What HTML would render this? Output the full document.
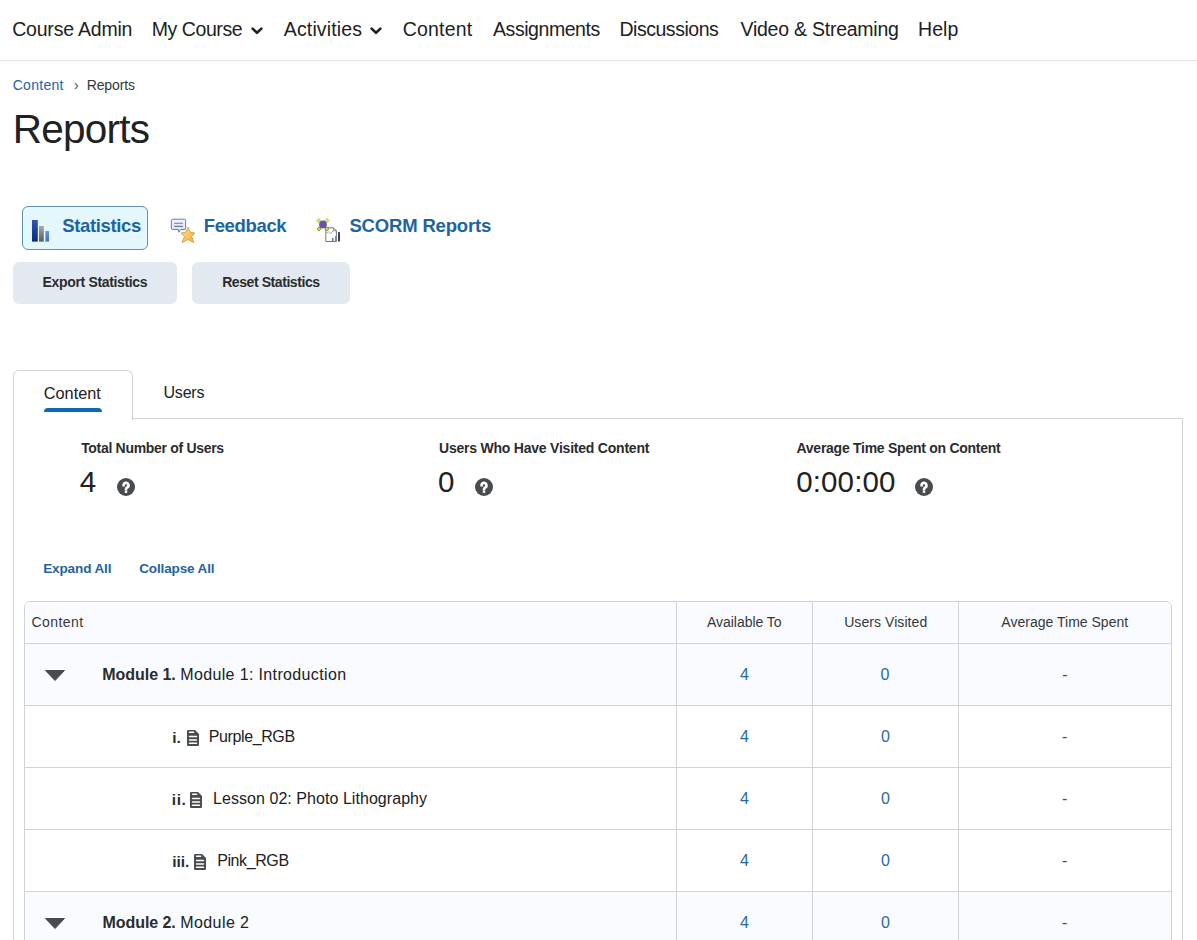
<!DOCTYPE html>
<html>
<head>
<meta charset="utf-8">
<style>
html,body{margin:0;padding:0;background:#fff;}
body{width:1197px;height:940px;overflow:hidden;position:relative;font-family:"Liberation Sans",sans-serif;color:#202122;}
.t{position:absolute;white-space:nowrap;line-height:1;}
.b{font-weight:bold;color:#2a2c2e;}
.b.lnk{color:#1d64a0;}
.lnk{color:#1d64a0;}
.box{position:absolute;box-sizing:border-box;}
svg{position:absolute;}
</style>
</head>
<body>
<div class="box" style="left:0;top:0;width:1197px;height:61px;border-bottom:1px solid #e4e5e6"></div>
<div class="box" style="left:0;top:61px;width:1197px;height:4px;background:linear-gradient(#f8f8f8,#fcfcfc 70%,#fff)"></div>
<div id="t1" class="t " style="left:12.20px;top:20.49px;font-size:19.5px;letter-spacing:-0.200px;">Course Admin</div>
<div id="t2" class="t " style="left:151.72px;top:20.49px;font-size:19.5px;letter-spacing:-0.425px;">My Course</div>
<div id="t3" class="t " style="left:283.84px;top:20.49px;font-size:19.5px;letter-spacing:0.133px;">Activities</div>
<div id="t4" class="t " style="left:402.68px;top:20.49px;font-size:19.5px;letter-spacing:0.200px;">Content</div>
<div id="t5" class="t " style="left:493.00px;top:20.49px;font-size:19.5px;letter-spacing:-0.440px;">Assignments</div>
<div id="t6" class="t " style="left:619.40px;top:20.49px;font-size:19.5px;letter-spacing:-0.460px;">Discussions</div>
<div id="t7" class="t " style="left:740.48px;top:20.49px;font-size:19.5px;letter-spacing:-0.238px;">Video &amp; Streaming</div>
<div id="t8" class="t " style="left:918.04px;top:20.49px;font-size:19.5px;letter-spacing:0.067px;">Help</div>
<svg style="left:250.6px;top:27px" width="12" height="8" viewBox="0 0 12 8"><path d="M1.6 1.6 L6 5.8 L10.4 1.6" fill="none" stroke="#202122" stroke-width="2.6" stroke-linecap="round" stroke-linejoin="round"/></svg>
<svg style="left:369.8px;top:27px" width="12" height="8" viewBox="0 0 12 8"><path d="M1.6 1.6 L6 5.8 L10.4 1.6" fill="none" stroke="#202122" stroke-width="2.6" stroke-linecap="round" stroke-linejoin="round"/></svg>
<div id="t9" class="t lnk" style="left:12.68px;top:77.95px;font-size:14px;letter-spacing:0.300px;">Content</div>
<div id="t10" class="t " style="left:74.00px;top:77.95px;font-size:14px;letter-spacing:0.000px;color:#494c4e">›</div>
<div id="t11" class="t " style="left:86.68px;top:77.95px;font-size:14px;letter-spacing:-0.100px;color:#35383a">Reports</div>
<div id="t12" class="t " style="left:12.84px;top:109.01px;font-size:40.5px;letter-spacing:-0.767px;">Reports</div>
<div class="box" style="left:22px;top:206px;width:126px;height:44px;border:1px solid #6294a8;border-radius:6px;background:#e3f7fc"></div>
<svg style="left:32px;top:220px" width="18" height="22" viewBox="0 0 18 22">
<defs>
<linearGradient id="g1" x1="0" y1="0" x2="0" y2="1"><stop offset="0" stop-color="#2f55b8"/><stop offset="1" stop-color="#0b2a78"/></linearGradient>
<linearGradient id="g2" x1="0" y1="0" x2="0" y2="1"><stop offset="0" stop-color="#a9a9a9"/><stop offset="1" stop-color="#5a5a5a"/></linearGradient>
<linearGradient id="g3" x1="0" y1="0" x2="0" y2="1"><stop offset="0" stop-color="#5a9ae8"/><stop offset="1" stop-color="#3a6fc8"/></linearGradient>
</defs>
<rect x="0" y="0" width="5.8" height="21.6" fill="url(#g1)"/>
<rect x="7" y="6" width="4.8" height="15.6" fill="url(#g2)"/>
<rect x="13.4" y="11" width="3.6" height="10.6" fill="url(#g3)"/>
</svg>
<div id="t13" class="t b lnk" style="left:62.36px;top:217.14px;font-size:18.5px;letter-spacing:-0.378px;">Statistics</div>
<svg style="left:165px;top:212px" width="35" height="36" viewBox="0 0 35 36">
<defs><linearGradient id="gs" x1="0" y1="0" x2="1" y2="1"><stop offset="0" stop-color="#fde39a"/><stop offset="1" stop-color="#f3aa35"/></linearGradient>
<linearGradient id="gb" x1="0" y1="0" x2="0" y2="1"><stop offset="0" stop-color="#f2f5fd"/><stop offset="1" stop-color="#d5ddf7"/></linearGradient></defs>
<path d="M7.9 7.2 h11.2 a1.6 1.6 0 0 1 1.6 1.6 v7.2 a1.6 1.6 0 0 1 -1.6 1.6 h-3.4 l-1.8 2.6 l-0.6 -2.6 h-5.4 a1.6 1.6 0 0 1 -1.6 -1.6 v-7.2 a1.6 1.6 0 0 1 1.6 -1.6z" fill="url(#gb)" stroke="#6f7c98" stroke-width="1"/>
<path d="M9.2 11.3 h8.6 M9.2 14.4 h8.6" stroke="#6f7c98" stroke-width="1.1"/>
<path d="M23 15.3 L25.2 20.2 L29.9 21 L26.5 24.6 L28.9 30.6 L23 27.6 L17 30.6 L19.5 24.6 L16 21 L20.8 20.2z" fill="url(#gs)" stroke="#d9962a" stroke-width="0.8" stroke-linejoin="round"/>
</svg>
<div id="t14" class="t b lnk" style="left:203.72px;top:217.14px;font-size:18.5px;letter-spacing:-0.343px;">Feedback</div>
<svg style="left:310px;top:212px" width="35" height="36" viewBox="0 0 35 36">
<path d="M15.8 15.8 h7.6 l3 3 v10.7 h-10.6z" fill="#fff" stroke="#7a7a7a" stroke-width="1"/>
<path d="M23.4 15.8 v3 h3" fill="none" stroke="#7a7a7a" stroke-width="0.9"/>
<path d="M16.3 21.5 l2.2 -1.8 l2 2.2 l2.5 -3" fill="none" stroke="#7cc05a" stroke-width="0.9"/>
<rect x="21.9" y="26" width="1.8" height="3.5" fill="#6a86c0"/>
<rect x="25" y="24" width="1.8" height="5.5" fill="#7c8a8c"/>
<rect x="28.1" y="20.1" width="1.8" height="9.4" fill="#1d3160"/>
<path d="M8.8 8.6 L16.9 16.9 M17 8.6 L9 16.9" stroke="#8db84a" stroke-width="1.4"/>
<circle cx="13" cy="12.4" r="3.9" fill="#6b52a6"/>
<rect x="7.3" y="7.1" width="3" height="3" transform="rotate(45 8.8 8.6)" fill="#cfe58a" stroke="#9cc048" stroke-width="0.6"/>
<rect x="15.5" y="7.1" width="3" height="3" transform="rotate(45 17 8.6)" fill="#cfe58a" stroke="#9cc048" stroke-width="0.6"/>
<rect x="7.5" y="15.4" width="3" height="3" transform="rotate(45 9 16.9)" fill="#b6dc4a" stroke="#5f8f1c" stroke-width="0.7"/>
<rect x="15.4" y="15.4" width="3" height="3" transform="rotate(45 16.9 16.9)" fill="#b6dc4a" stroke="#5f8f1c" stroke-width="0.7"/>
</svg>
<div id="t15" class="t b lnk" style="left:349.40px;top:217.14px;font-size:18.5px;letter-spacing:-0.167px;">SCORM Reports</div>
<div class="box" style="left:13px;top:262px;width:164px;height:42px;border-radius:6px;background:#e3e9f1"></div>
<div id="t16" class="t b" style="left:42.52px;top:275.05px;font-size:14px;letter-spacing:-0.338px;">Export Statistics</div>
<div class="box" style="left:192px;top:262px;width:158px;height:42px;border-radius:6px;background:#e3e9f1"></div>
<div id="t17" class="t b" style="left:222.20px;top:275.05px;font-size:14px;letter-spacing:-0.427px;">Reset Statistics</div>
<div class="box" style="left:13px;top:418px;width:1170px;height:600px;border:1px solid #d0d4d7;background:#fff"></div>
<div class="box" style="left:13px;top:370px;width:120px;height:50px;border:1px solid #d0d4d7;border-bottom:none;border-radius:6px 6px 0 0;background:#fff"></div>
<div id="t18" class="t " style="left:43.68px;top:384.90px;font-size:16.3px;letter-spacing:0.033px;">Content</div>
<div class="box" style="left:44px;top:408px;width:58px;height:4px;border-radius:4px 4px 0 0;background:#0a6ab8"></div>
<div id="t19" class="t " style="left:163.52px;top:385.15px;font-size:16px;letter-spacing:-0.200px;">Users</div>
<div id="t20" class="t b" style="left:81.16px;top:440.75px;font-size:14px;letter-spacing:-0.310px;">Total Number of Users</div>
<div id="t21" class="t " style="left:79.84px;top:467.12px;font-size:29.5px;letter-spacing:0.000px;">4</div>
<svg style="left:117px;top:478px" width="18" height="18" viewBox="0 0 18 18"><circle cx="9" cy="9" r="9" fill="#494c4e"/><path d="M6.6 7.3 a2.45 2.45 0 1 1 3.5 2.2 c-0.8 0.4 -1.1 0.8 -1.1 1.7" fill="none" stroke="#fff" stroke-width="2.6" stroke-linecap="square"/><rect x="7.8" y="12.7" width="2.4" height="2.2" fill="#fff"/></svg>
<div id="t22" class="t b" style="left:439.00px;top:440.75px;font-size:14px;letter-spacing:-0.221px;">Users Who Have Visited Content</div>
<div id="t23" class="t " style="left:438.00px;top:467.12px;font-size:29.5px;letter-spacing:0.000px;">0</div>
<svg style="left:475px;top:478px" width="18" height="18" viewBox="0 0 18 18"><circle cx="9" cy="9" r="9" fill="#494c4e"/><path d="M6.6 7.3 a2.45 2.45 0 1 1 3.5 2.2 c-0.8 0.4 -1.1 0.8 -1.1 1.7" fill="none" stroke="#fff" stroke-width="2.6" stroke-linecap="square"/><rect x="7.8" y="12.7" width="2.4" height="2.2" fill="#fff"/></svg>
<div id="t24" class="t b" style="left:796.52px;top:440.75px;font-size:14px;letter-spacing:-0.264px;">Average Time Spent on Content</div>
<div id="t25" class="t " style="left:796.32px;top:467.12px;font-size:29.5px;letter-spacing:0.100px;">0:00:00</div>
<svg style="left:915px;top:478px" width="18" height="18" viewBox="0 0 18 18"><circle cx="9" cy="9" r="9" fill="#494c4e"/><path d="M6.6 7.3 a2.45 2.45 0 1 1 3.5 2.2 c-0.8 0.4 -1.1 0.8 -1.1 1.7" fill="none" stroke="#fff" stroke-width="2.6" stroke-linecap="square"/><rect x="7.8" y="12.7" width="2.4" height="2.2" fill="#fff"/></svg>
<div id="t26" class="t b lnk" style="left:43.20px;top:562.07px;font-size:13.5px;letter-spacing:-0.111px;">Expand All</div>
<div id="t27" class="t b lnk" style="left:139.20px;top:562.07px;font-size:13.5px;letter-spacing:-0.127px;">Collapse All</div>
<div class="box" style="left:24px;top:601px;width:1148px;height:400px;border:1px solid #d0d4d7;border-radius:6px 6px 0 0;background:#fff;overflow:hidden">
<div style="position:absolute;left:0;top:0;width:1146px;height:41px;background:#f9fbff;border-bottom:1px solid #d0d4d7"></div>
<div style="position:absolute;left:0;top:42px;width:1146px;height:61px;background:#f9fbff;border-bottom:1px solid #d0d4d7"></div>
<div style="position:absolute;left:0;top:104px;width:1146px;height:61px;background:#fff;border-bottom:1px solid #d0d4d7"></div>
<div style="position:absolute;left:0;top:166px;width:1146px;height:61px;background:#fff;border-bottom:1px solid #d0d4d7"></div>
<div style="position:absolute;left:0;top:228px;width:1146px;height:61px;background:#fff;border-bottom:1px solid #d0d4d7"></div>
<div style="position:absolute;left:0;top:290px;width:1146px;height:61px;background:#f9fbff;border-bottom:1px solid #d0d4d7"></div>
<div style="position:absolute;left:651px;top:0;width:1px;height:400px;background:#d0d4d7"></div>
<div style="position:absolute;left:787px;top:0;width:1px;height:400px;background:#d0d4d7"></div>
<div style="position:absolute;left:933px;top:0;width:1px;height:400px;background:#d0d4d7"></div>
</div>
<div id="t28" class="t " style="left:31.52px;top:614.75px;font-size:14px;letter-spacing:0.433px;color:#35383a">Content</div>
<div id="t29" class="t " style="left:707.00px;top:614.75px;font-size:14px;letter-spacing:-0.036px;color:#35383a">Available To</div>
<div id="t30" class="t " style="left:844.20px;top:614.75px;font-size:14px;letter-spacing:0.067px;color:#35383a">Users Visited</div>
<div id="t31" class="t " style="left:1001.36px;top:614.75px;font-size:14px;letter-spacing:0.012px;color:#35383a">Average Time Spent</div>
<svg style="left:45px;top:670px" width="20" height="11" viewBox="0 0 20 11"><path d="M0.5 0.5 H19.5 L10 10.5z" fill="#494c4e" stroke="#494c4e" stroke-width="1" stroke-linejoin="round"/></svg>
<div id="t32" class="t b" style="left:102.20px;top:667.25px;font-size:16px;letter-spacing:-0.025px;">Module 1.</div>
<div id="t33" class="t " style="left:180.20px;top:667.25px;font-size:16px;letter-spacing:0.362px;">Module 1: Introduction</div>
<div id="t34" class="t " style="left:740.00px;top:667.25px;font-size:16px;letter-spacing:0.000px;color:#2a6aa0">4</div>
<div id="t35" class="t " style="left:880.52px;top:667.25px;font-size:16px;letter-spacing:0.000px;color:#2a6aa0">0</div>
<div id="t36" class="t " style="left:1062.16px;top:667.25px;font-size:16px;letter-spacing:0.000px;color:#494c4e">-</div>
<div id="t37" class="t b" style="left:172.36px;top:729.68px;font-size:15.5px;letter-spacing:-0.200px;">i.</div>
<svg style="left:187px;top:730px" width="12" height="16" viewBox="0 0 12 16"><path d="M1.2 0 h6.8 l4 4 v10.8 a1.2 1.2 0 0 1 -1.2 1.2 h-9.6 a1.2 1.2 0 0 1 -1.2 -1.2 v-13.6 a1.2 1.2 0 0 1 1.2 -1.2z" fill="#494c4e"/><rect x="1.8" y="1.5" width="5.6" height="1.5" rx="0.7" fill="#fff"/><rect x="1.8" y="5.7" width="8.4" height="1.5" rx="0.7" fill="#fff"/><rect x="1.8" y="9.2" width="8.4" height="1.5" rx="0.7" fill="#fff"/><rect x="1.8" y="12.6" width="8.4" height="1.5" rx="0.7" fill="#fff"/></svg>
<div id="t38" class="t " style="left:208.84px;top:729.25px;font-size:16px;letter-spacing:-0.400px;">Purple_RGB</div>
<div id="t39" class="t " style="left:740.00px;top:729.25px;font-size:16px;letter-spacing:0.000px;color:#2a6aa0">4</div>
<div id="t40" class="t " style="left:881.00px;top:729.25px;font-size:16px;letter-spacing:0.000px;color:#2a6aa0">0</div>
<div id="t41" class="t " style="left:1062.00px;top:729.25px;font-size:16px;letter-spacing:0.000px;color:#494c4e">-</div>
<div id="t42" class="t b" style="left:171.72px;top:791.68px;font-size:15.5px;letter-spacing:0.600px;">ii.</div>
<svg style="left:190px;top:792px" width="12" height="16" viewBox="0 0 12 16"><path d="M1.2 0 h6.8 l4 4 v10.8 a1.2 1.2 0 0 1 -1.2 1.2 h-9.6 a1.2 1.2 0 0 1 -1.2 -1.2 v-13.6 a1.2 1.2 0 0 1 1.2 -1.2z" fill="#494c4e"/><rect x="1.8" y="1.5" width="5.6" height="1.5" rx="0.7" fill="#fff"/><rect x="1.8" y="5.7" width="8.4" height="1.5" rx="0.7" fill="#fff"/><rect x="1.8" y="9.2" width="8.4" height="1.5" rx="0.7" fill="#fff"/><rect x="1.8" y="12.6" width="8.4" height="1.5" rx="0.7" fill="#fff"/></svg>
<div id="t43" class="t " style="left:213.04px;top:791.25px;font-size:16px;letter-spacing:0.052px;">Lesson 02: Photo Lithography</div>
<div id="t44" class="t " style="left:740.00px;top:791.25px;font-size:16px;letter-spacing:0.000px;color:#2a6aa0">4</div>
<div id="t45" class="t " style="left:881.00px;top:791.25px;font-size:16px;letter-spacing:0.000px;color:#2a6aa0">0</div>
<div id="t46" class="t " style="left:1062.00px;top:791.25px;font-size:16px;letter-spacing:0.000px;color:#494c4e">-</div>
<div id="t47" class="t b" style="left:172.20px;top:853.68px;font-size:15.5px;letter-spacing:0.000px;">iii.</div>
<svg style="left:194px;top:854px" width="12" height="16" viewBox="0 0 12 16"><path d="M1.2 0 h6.8 l4 4 v10.8 a1.2 1.2 0 0 1 -1.2 1.2 h-9.6 a1.2 1.2 0 0 1 -1.2 -1.2 v-13.6 a1.2 1.2 0 0 1 1.2 -1.2z" fill="#494c4e"/><rect x="1.8" y="1.5" width="5.6" height="1.5" rx="0.7" fill="#fff"/><rect x="1.8" y="5.7" width="8.4" height="1.5" rx="0.7" fill="#fff"/><rect x="1.8" y="9.2" width="8.4" height="1.5" rx="0.7" fill="#fff"/><rect x="1.8" y="12.6" width="8.4" height="1.5" rx="0.7" fill="#fff"/></svg>
<div id="t48" class="t " style="left:217.20px;top:853.25px;font-size:16px;letter-spacing:-0.400px;">Pink_RGB</div>
<div id="t49" class="t " style="left:740.00px;top:853.25px;font-size:16px;letter-spacing:0.000px;color:#2a6aa0">4</div>
<div id="t50" class="t " style="left:881.00px;top:853.25px;font-size:16px;letter-spacing:0.000px;color:#2a6aa0">0</div>
<div id="t51" class="t " style="left:1062.00px;top:853.25px;font-size:16px;letter-spacing:0.000px;color:#494c4e">-</div>
<svg style="left:45px;top:918px" width="20" height="11" viewBox="0 0 20 11"><path d="M0.5 0.5 H19.5 L10 10.5z" fill="#494c4e" stroke="#494c4e" stroke-width="1" stroke-linejoin="round"/></svg>
<div id="t52" class="t b" style="left:102.60px;top:915.25px;font-size:16px;letter-spacing:-0.075px;">Module 2.</div>
<div id="t53" class="t " style="left:180.20px;top:915.25px;font-size:16px;letter-spacing:0.429px;">Module 2</div>
<div id="t54" class="t " style="left:740.00px;top:915.25px;font-size:16px;letter-spacing:0.000px;color:#2a6aa0">4</div>
<div id="t55" class="t " style="left:881.00px;top:915.25px;font-size:16px;letter-spacing:0.000px;color:#2a6aa0">0</div>
<div id="t56" class="t " style="left:1062.00px;top:915.25px;font-size:16px;letter-spacing:0.000px;color:#494c4e">-</div>
</body>
</html>
